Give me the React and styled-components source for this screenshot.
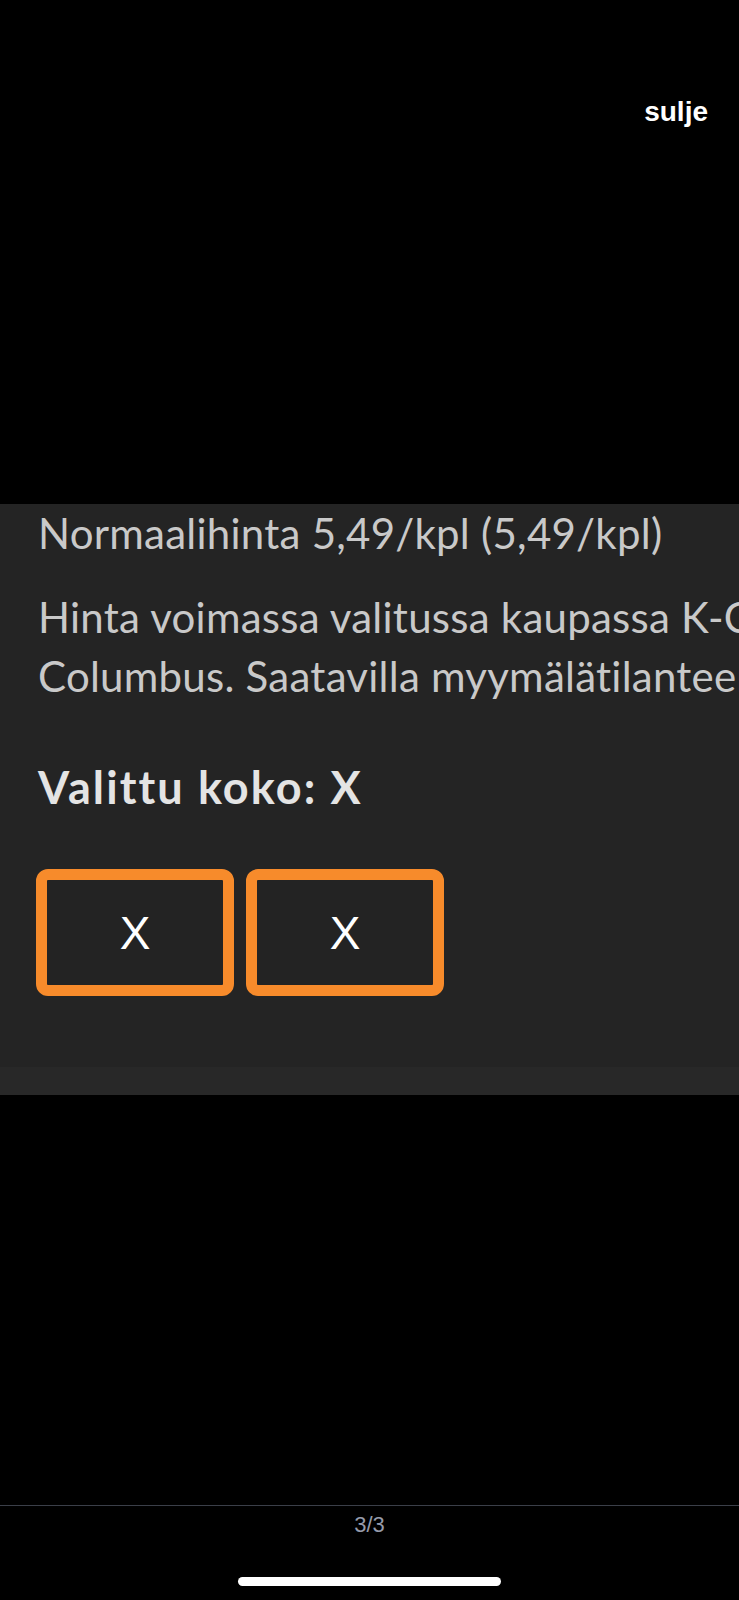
import React from "react";
import styled, { createGlobalStyle } from "styled-components";

const Global = createGlobalStyle`
  html, body {
    margin: 0;
    padding: 0;
    background: #000;
    overflow-x: hidden;
  }
  * { box-sizing: border-box; }
`;

const Screen = styled.div`
  width: 739px;
  height: 1600px;
  display: flex;
  flex-direction: column;
  background: #000;
  overflow: hidden;
`;

const TopBar = styled.div`
  height: 504px;
  flex: none;
  display: flex;
  justify-content: flex-end;
  align-items: flex-start;
  padding: 98px 31px 0 0;
`;

const CloseButton = styled.button`
  border: none;
  background: none;
  padding: 0;
  color: #fff;
  font-family: "Liberation Sans", Arial, sans-serif;
  font-weight: 700;
  font-size: 28px;
  line-height: 28px;
  cursor: pointer;
`;

const Panel = styled.section`
  flex: none;
  background: #242424;
  overflow: hidden;
  display: flex;
  flex-direction: column;
`;

const Content = styled.div`
  padding: 0 0 71px 38px;
  display: flex;
  flex-direction: column;
  font-family: Lato, "Open Sans", sans-serif;
`;

const Text = styled.p`
  margin: ${(p) => p.$top || 0}px 0 0;
  font-size: 42px;
  line-height: 59px;
  letter-spacing: 0.25px;
  color: #c9c9c9;
  white-space: nowrap;
`;

const Heading = styled.h3`
  margin: 52px 0 0;
  font-size: 45px;
  line-height: 59px;
  font-weight: 700;
  letter-spacing: 2.1px;
  color: #e4e4e4;
  white-space: nowrap;
`;

const SizeRow = styled.div`
  margin-top: 52px;
  margin-left: -2px;
  display: flex;
  gap: 12px;
`;

const SizeButton = styled.button`
  width: 198px;
  height: 127px;
  border: 11px solid #f78b2b;
  border-radius: 12px;
  background: #232323;
  color: #fff;
  font-family: "Liberation Sans", Arial, sans-serif;
  font-size: 46px;
  line-height: 1;
  display: flex;
  align-items: center;
  justify-content: center;
  padding: 0;
`;

const PanelStrip = styled.div`
  height: 28px;
  background: #282828;
`;

const Spacer = styled.div`
  flex: 1;
`;

const Footer = styled.footer`
  height: 95px;
  flex: none;
  border-top: 1px solid #3b3f49;
  display: flex;
  flex-direction: column;
  align-items: center;
  padding-top: 6px;
`;

const PageCount = styled.span`
  font-family: "Liberation Sans", Arial, sans-serif;
  font-size: 22px;
  line-height: 26px;
  color: #959bab;
`;

const HomeIndicator = styled.div`
  margin-top: 39px;
  width: 263px;
  height: 9px;
  border-radius: 5px;
  background: #fff;
`;

export default function App() {
  return (
    <>
      <Global />
      <Screen>
        <TopBar>
          <CloseButton>sulje</CloseButton>
        </TopBar>
        <Panel>
          <Content>
            <Text>Normaalihinta 5,49/kpl (5,49/kpl)</Text>
            <Text $top={25}>
              Hinta voimassa valitussa kaupassa K-Citymarket
              <br />
              Columbus. Saatavilla myymälätilanteen mukaan.
            </Text>
            <Heading>Valittu koko: X</Heading>
            <SizeRow>
              <SizeButton>X</SizeButton>
              <SizeButton>X</SizeButton>
            </SizeRow>
          </Content>
          <PanelStrip />
        </Panel>
        <Spacer />
        <Footer>
          <PageCount>3/3</PageCount>
          <HomeIndicator />
        </Footer>
      </Screen>
    </>
  );
}
